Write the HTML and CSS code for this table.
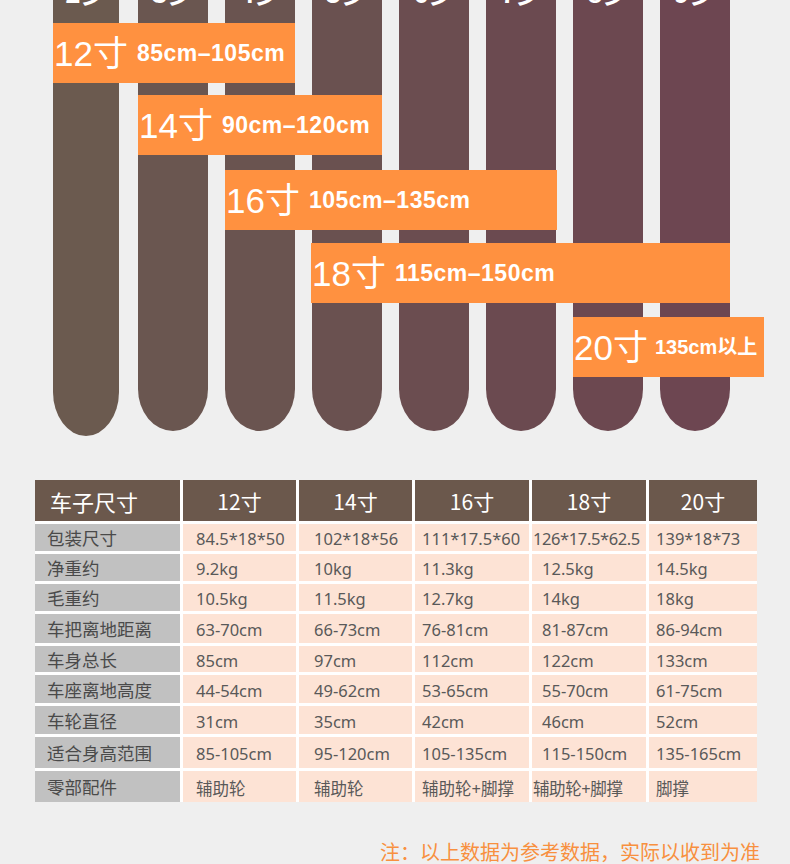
FILE: index.html
```html
<!DOCTYPE html>
<html lang="zh-CN">
<head>
<meta charset="utf-8">
<title>儿童自行车尺寸</title>
<link rel="stylesheet" href="styles.css">
</head>
<body>
<div class="page">
  <section class="chart">
    <div class="bars">
      <div class="bar b1"><span class="age">2岁</span></div>
      <div class="bar b2"><span class="age">3岁</span></div>
      <div class="bar b3"><span class="age">4岁</span></div>
      <div class="bar b4"><span class="age">5岁</span></div>
      <div class="bar b5"><span class="age">6岁</span></div>
      <div class="bar b6"><span class="age">7岁</span></div>
      <div class="bar b7"><span class="age">8岁</span></div>
      <div class="bar b8"><span class="age">9岁</span></div>
    </div>
    <div class="tag t12"><span class="size">12寸</span><span class="range">85cm–105cm</span></div>
    <div class="tag t14"><span class="size">14寸</span><span class="range">90cm–120cm</span></div>
    <div class="tag t16"><span class="size">16寸</span><span class="range">105cm–135cm</span></div>
    <div class="tag t18"><span class="size">18寸</span><span class="range">115cm–150cm</span></div>
    <div class="tag t20"><span class="size">20寸</span><span class="range small">135cm以上</span></div>
  </section>

  <div class="spec">
    <div class="row head"><div>车子尺寸</div><div>12寸</div><div>14寸</div><div>16寸</div><div>18寸</div><div>20寸</div></div>
    <div class="row"><div>包装尺寸</div><div>84.5*18*50</div><div>102*18*56</div><div>111*17.5*60</div><div class="tight">126*17.5*62.5</div><div>139*18*73</div></div>
    <div class="row"><div>净重约</div><div>9.2kg</div><div>10kg</div><div>11.3kg</div><div>12.5kg</div><div>14.5kg</div></div>
    <div class="row"><div>毛重约</div><div>10.5kg</div><div>11.5kg</div><div>12.7kg</div><div>14kg</div><div>18kg</div></div>
    <div class="row"><div>车把离地距离</div><div>63-70cm</div><div>66-73cm</div><div>76-81cm</div><div>81-87cm</div><div>86-94cm</div></div>
    <div class="row"><div>车身总长</div><div>85cm</div><div>97cm</div><div>112cm</div><div>122cm</div><div>133cm</div></div>
    <div class="row"><div>车座离地高度</div><div>44-54cm</div><div>49-62cm</div><div>53-65cm</div><div>55-70cm</div><div>61-75cm</div></div>
    <div class="row"><div>车轮直径</div><div>31cm</div><div>35cm</div><div>42cm</div><div>46cm</div><div>52cm</div></div>
    <div class="row"><div>适合身高范围</div><div>85-105cm</div><div>95-120cm</div><div>105-135cm</div><div>115-150cm</div><div>135-165cm</div></div>
    <div class="row"><div>零部配件</div><div>辅助轮</div><div>辅助轮</div><div>辅助轮+脚撑</div><div class="tight">辅助轮+脚撑</div><div>脚撑</div></div>
  </div>

  <p class="note">注：以上数据为参考数据，实际以收到为准</p>
</div>
</body>
</html>
```

FILE: styles.css
```css
html, body {
  margin: 0;
  padding: 0;
  background: #efefef;
}

.page {
  width: 790px;
  height: 864px;
  overflow: hidden;
  font-family: "Noto Sans", "Noto Sans CJK SC", sans-serif;
}

/* ---------- chart ---------- */
.chart {
  position: relative;
  height: 480px;
}

.bars {
  display: flex;
  align-items: flex-start;
  gap: 17px;
  padding-left: 53px;
}

.bar {
  width: 70px;
  height: 431px;
  border-radius: 0 0 35px 35px / 0 0 42px 42px;
  overflow: hidden;
  display: flex;
  justify-content: center;
}

.b1 { width: 66px; height: 436px; margin-right: 2px; background: #6b5a4f; border-radius: 0 0 33px 33px / 0 0 44px 44px; }
.b2 { background: #6a5650; }
.b3 { background: #6a5450; }
.b4 { background: #6a5150; }
.b5 { background: #6b4d50; }
.b6 { background: #6b4a50; }
.b7 { background: #6c4850; }
.b8 { background: #6d4651; }

.age {
  display: block;
  margin-top: -21px;
  font-family: "Noto Sans CJK SC", sans-serif;
  font-size: 26px;
  font-weight: 700;
  line-height: 26px;
  color: #ffffff;
  white-space: nowrap;
}

.tag {
  position: absolute;
  height: 60px;
  background: #ff9140;
  display: flex;
  align-items: center;
  padding-left: 1px;
  box-sizing: border-box;
  color: #ffffff;
  font-family: "Liberation Sans", "Noto Sans CJK SC", sans-serif;
  white-space: nowrap;
}

.t12 { left: 53px;  top: 23px;  width: 242px; }
.t14 { left: 138px; top: 95px;  width: 244px; }
.t16 { left: 225px; top: 170px; width: 332px; }
.t18 { left: 311px; top: 243px; width: 419px; }
.t20 { left: 573px; top: 317px; width: 191px; }

.size {
  font-size: 35px;
  line-height: 1;
}

.range {
  margin-left: 9px;
  font-size: 23px;
  font-weight: 700;
  letter-spacing: 0.5px;
  line-height: 1;
}

.range.small {
  margin-left: 7px;
  font-size: 20px;
  letter-spacing: 0;
}

/* ---------- spec table ---------- */
.spec {
  margin-left: 35px;
  width: 722px;
  background: #ffffff;
  display: grid;
  grid-template-columns: 145px 113px 113px 114px 114px 108px;
  grid-template-rows: 41px 27px 27px 27px 29px 26px 28px 28px 31px 31px;
  column-gap: 3px;
  row-gap: 3px;
}

.row {
  display: contents;
}

.row > div {
  display: flex;
  align-items: center;
  background: #fde3d5;
  color: #595959;
  font-size: 16.5px;
  padding-top: 2px;
  box-sizing: border-box;
  white-space: nowrap;
}

.row > div:nth-child(1) {
  background: #c1c1c1;
  color: #4a4a4a;
  font-family: "Noto Sans CJK SC", sans-serif;
  font-size: 17.5px;
  padding-left: 12px;
  padding-top: 0;
}
.row > div:nth-child(2) { padding-left: 13px; }
.row > div:nth-child(3) { padding-left: 15px; }
.row > div:nth-child(4) { padding-left: 7px; }
.row > div:nth-child(5) { padding-left: 10px; }
.row > div:nth-child(6) { padding-left: 7px; }
.row > div.tight { padding-left: 1px; letter-spacing: -0.4px; }

.row.head > div {
  background: #6b584c;
  color: #ffffff;
  font-family: "Noto Sans CJK SC", sans-serif;
  font-size: 21px;
  justify-content: center;
  padding-left: 0;
  padding-top: 0;
}
.row.head > div:nth-child(1) {
  justify-content: flex-start;
  padding-left: 15px;
  font-size: 22px;
  color: #ffffff;
}

/* ---------- note ---------- */
.note {
  margin: 36px 30px 0 0;
  text-align: right;
  font-family: "Noto Sans CJK SC", sans-serif;
  font-size: 20px;
  line-height: 28px;
  color: #f8903f;
}
```
